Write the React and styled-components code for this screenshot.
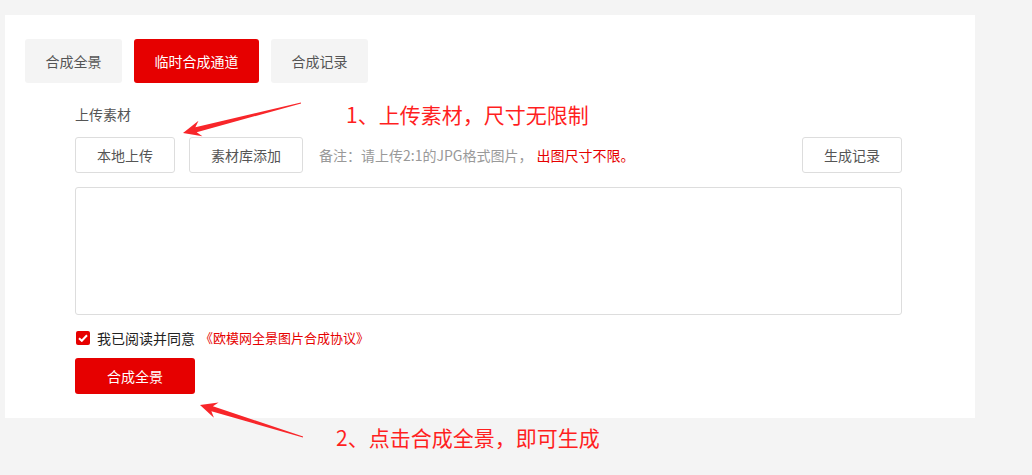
import React, { useState } from "react";
import styled, { createGlobalStyle } from "styled-components";

const GlobalStyle = createGlobalStyle`
  html, body {
    margin: 0;
    padding: 0;
    background: #f4f4f4;
    font-family: "Noto Sans CJK SC", "Noto Sans", sans-serif;
  }
`;

const RED = "#e60000";
const NOTE_RED = "#ff1f1f";

function arrowPoints(tail, tip, hl, hw, sw) {
  const dx = tip[0] - tail[0];
  const dy = tip[1] - tail[1];
  const len = Math.hypot(dx, dy);
  const d = [dx / len, dy / len];
  const n = [-d[1], d[0]];
  const at = (base, along, side) => [
    base[0] + d[0] * along + n[0] * side,
    base[1] + d[1] * along + n[1] * side,
  ];
  const pts = [
    at(tail, 0, 0.4),
    at(tip, -hl * 0.75, sw),
    at(tip, -hl, hw),
    tip,
    at(tip, -hl, -hw),
    at(tip, -hl * 0.75, -sw),
    at(tail, 0, -0.4),
  ];
  return pts.map((p) => p.map((v) => v.toFixed(1)).join(",")).join(" ");
}

export default function App() {
  const [tab, setTab] = useState(1);
  const [agreed, setAgreed] = useState(true);
  const tabs = ["合成全景", "临时合成通道", "合成记录"];

  return (
    <Page>
      <GlobalStyle />
      <Panel>
        <TabList>
          {tabs.map((t, i) => (
            <Tab key={t} $active={i === tab} onClick={() => setTab(i)}>
              {t}
            </Tab>
          ))}
        </TabList>

        <Body>
          <FieldLabel>上传素材</FieldLabel>
          <Toolbar>
            <Button>本地上传</Button>
            <Button>素材库添加</Button>
            <Note>
              备注：请上传2:1的JPG格式图片，
              <em>出图尺寸不限。</em>
            </Note>
            <Button $push>生成记录</Button>
          </Toolbar>
          <DropArea />
          <Agree onClick={() => setAgreed(!agreed)}>
            <Check $on={agreed}>
              {agreed && (
                <svg width="10" height="8" viewBox="0 0 10 8">
                  <path
                    d="M1 4.2 L3.8 6.8 L9 1.2"
                    fill="none"
                    stroke="#fff"
                    strokeWidth="2"
                  />
                </svg>
              )}
            </Check>
            我已阅读并同意
            <Link>《欧模网全景图片合成协议》</Link>
          </Agree>
          <Submit>合成全景</Submit>
        </Body>
      </Panel>

      <Overlay width="1032" height="475">
        <polygon
          points={arrowPoints([301, 103], [183, 133], 18, 8, 2.6)}
          fill="#f8262a"
        />
        <polygon
          points={arrowPoints([303, 437], [200, 405], 17, 8, 2.6)}
          fill="#f8262a"
        />
      </Overlay>
      <Callout $x={346} $y={100}>1、上传素材，尺寸无限制</Callout>
      <Callout $x={336} $y={423}>2、点击合成全景，即可生成</Callout>
    </Page>
  );
}

const Page = styled.div`
  position: relative;
  width: 1032px;
  height: 475px;
  padding: 15px 0 0 5px;
  box-sizing: border-box;
  overflow: hidden;
`;

const Panel = styled.div`
  width: 970px;
  height: 403px;
  background: #fff;
  padding: 24px 20px;
  box-sizing: border-box;
`;

const TabList = styled.div`
  display: flex;
  gap: 12px;
`;

const Tab = styled.div`
  height: 44px;
  padding: 0 20.5px;
  display: flex;
  align-items: center;
  border-radius: 3px;
  font-size: 14px;
  cursor: pointer;
  background: ${(p) => (p.$active ? RED : "#f4f4f4")};
  color: ${(p) => (p.$active ? "#fff" : "#555")};
`;

const Body = styled.div`
  width: 827px;
  margin: 21px 0 0 50px;
  display: flex;
  flex-direction: column;
`;

const FieldLabel = styled.div`
  font-size: 14px;
  line-height: 20px;
  color: #555;
`;

const Toolbar = styled.div`
  display: flex;
  align-items: center;
  gap: 14px;
  margin-top: 13px;
`;

const Button = styled.button`
  height: 36px;
  padding: 0 21px;
  border: 1px solid #ddd;
  border-radius: 3px;
  background: #fff;
  color: #555;
  font-family: inherit;
  font-size: 14px;
  cursor: pointer;
  margin-left: ${(p) => (p.$push ? "auto" : "0")};
`;

const Note = styled.span`
  margin-left: 2px;
  font-size: 14px;
  color: #999;

  em {
    font-style: normal;
    color: ${RED};
    margin-left: 4px;
  }
`;

const DropArea = styled.div`
  margin-top: 14px;
  height: 128px;
  box-sizing: border-box;
  border: 1px solid #ddd;
  border-radius: 3px;
`;

const Agree = styled.label`
  display: flex;
  align-items: center;
  margin-top: 15px;
  font-size: 14px;
  line-height: 16px;
  color: #222;
  cursor: pointer;
`;

const Check = styled.span`
  width: 14px;
  height: 14px;
  margin: 0 7px 0 1px;
  border-radius: 2px;
  display: flex;
  align-items: center;
  justify-content: center;
  background: ${(p) => (p.$on ? RED : "#fff")};
  border: ${(p) => (p.$on ? "none" : "1px solid #ccc")};
`;

const Link = styled.span`
  margin-left: 5px;
  font-size: 13px;
  color: ${RED};
`;

const Submit = styled.button`
  margin-top: 12px;
  width: 120px;
  height: 36px;
  border: none;
  border-radius: 3px;
  background: ${RED};
  color: #fff;
  font-family: inherit;
  font-size: 14px;
  cursor: pointer;
`;

const Overlay = styled.svg`
  position: absolute;
  left: 0;
  top: 0;
  pointer-events: none;
`;

const Callout = styled.div`
  position: absolute;
  left: ${(p) => p.$x}px;
  top: ${(p) => p.$y}px;
  font-size: 21px;
  line-height: 28px;
  color: ${NOTE_RED};
  white-space: nowrap;
`;
